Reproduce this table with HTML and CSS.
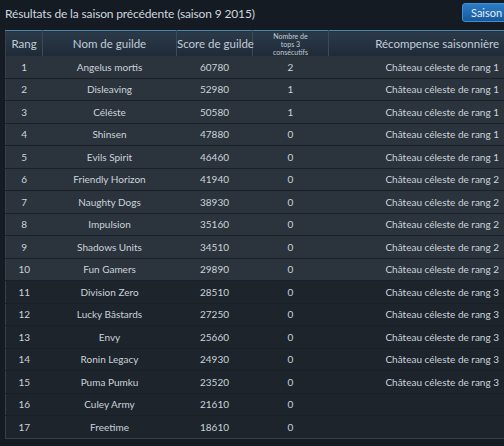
FILE: index.html
```html
<!DOCTYPE html>
<html lang="fr">
<head>
<meta charset="UTF-8">
<title>Résultats de la saison précédente</title>
<link rel="stylesheet" href="styles.css">
</head>
<body>

  <div class="top-bar">
    <h1 class="title">Résultats de la saison précédente (saison 9 2015)</h1>
    <button class="season-btn">Saison</button>
  </div>

  <table class="ranking">
    <thead>
      <tr>
        <th class="c-rank">Rang</th>
        <th class="c-name">Nom de guilde</th>
        <th class="c-score">Score de guilde</th>
        <th class="c-tops small">Nombre de<br>tops 3<br>consécutifs</th>
        <th class="c-reward">Récompense saisonnière</th>
      </tr>
    </thead>
    <tbody>
      <tr class="top"><td>1</td><td>Angelus mortis</td><td>60780</td><td>2</td><td class="c-reward">Château céleste de rang 1</td></tr>
      <tr class="top"><td>2</td><td>Disleaving</td><td>52980</td><td>1</td><td class="c-reward">Château céleste de rang 1</td></tr>
      <tr class="top"><td>3</td><td>Céléste</td><td>50580</td><td>1</td><td class="c-reward">Château céleste de rang 1</td></tr>
      <tr class="top"><td>4</td><td>Shinsen</td><td>47880</td><td>0</td><td class="c-reward">Château céleste de rang 1</td></tr>
      <tr class="top"><td>5</td><td>Evils Spirit</td><td>46460</td><td>0</td><td class="c-reward">Château céleste de rang 1</td></tr>
      <tr class="top"><td>6</td><td>Friendly Horizon</td><td>41940</td><td>0</td><td class="c-reward">Château céleste de rang 2</td></tr>
      <tr class="top"><td>7</td><td>Naughty Dogs</td><td>38930</td><td>0</td><td class="c-reward">Château céleste de rang 2</td></tr>
      <tr class="top"><td>8</td><td>Impulsion</td><td>35160</td><td>0</td><td class="c-reward">Château céleste de rang 2</td></tr>
      <tr class="top"><td>9</td><td>Shadows Units</td><td>34510</td><td>0</td><td class="c-reward">Château céleste de rang 2</td></tr>
      <tr class="top"><td>10</td><td>Fun Gamers</td><td>29890</td><td>0</td><td class="c-reward">Château céleste de rang 2</td></tr>
      <tr><td>11</td><td>Division Zero</td><td>28510</td><td>0</td><td class="c-reward">Château céleste de rang 3</td></tr>
      <tr><td>12</td><td>Lucky Bâstards</td><td>27250</td><td>0</td><td class="c-reward">Château céleste de rang 3</td></tr>
      <tr><td>13</td><td>Envy</td><td>25660</td><td>0</td><td class="c-reward">Château céleste de rang 3</td></tr>
      <tr><td>14</td><td>Ronin Legacy</td><td>24930</td><td>0</td><td class="c-reward">Château céleste de rang 3</td></tr>
      <tr><td>15</td><td>Puma Pumku</td><td>23520</td><td>0</td><td class="c-reward">Château céleste de rang 3</td></tr>
      <tr><td>16</td><td>Culey Army</td><td>21610</td><td>0</td><td class="c-reward"></td></tr>
      <tr><td>17</td><td>Freetime</td><td>18610</td><td>0</td><td class="c-reward"></td></tr>
    </tbody>
  </table>

</body>
</html>
```

FILE: styles.css
```css
body {
    margin: 0;
    background-color: #141b23;
    font-family: Lato, "Open Sans", sans-serif;
    color: #cbd3db;
    overflow: hidden;
}

/* Barre du haut */
.top-bar {
    display: flex;
    justify-content: space-between;
    align-items: center;
    height: 26px;
    padding-left: 5px;
}

.title {
    margin: 0;
    font-size: 12px;
    font-weight: normal;
    color: #cfd6de;
    letter-spacing: -0.15px;
}

.season-btn {
    align-self: flex-start;
    margin-top: 3px;
    margin-right: -4px;
    width: 46px;
    height: 19px;
    padding: 0 0 0 8px;
    text-align: left;
    border: 1px solid #3f8fd6;
    border-radius: 3px;
    background: linear-gradient(#2b7dc9, #17579a);
    color: #e6eef6;
    font-family: inherit;
    font-size: 11px;
}

/* Tableau */
.ranking {
    margin-left: 5px;
    margin-top: 4px;
    width: 499px;
    border-collapse: collapse;
    table-layout: fixed;
    font-size: 10px;
    border-left: 1px solid #36404b;
}

.ranking th {
    height: 25px;
    padding: 0;
    font-size: 11.5px;
    font-weight: normal;
    white-space: nowrap;
    color: #c3cdd7;
    background: linear-gradient(#2b3a4a, #1f2a37);
    border-top: 1px solid #4d86ab;
    border-right: 1px solid #3b4a5a;
}

.ranking th.small {
    font-size: 7px;
    line-height: 8px;
}

.ranking th:last-child {
    border-right: none;
}

.c-rank { width: 36px; }
.c-name { width: 133px; }
.c-score { width: 75px; }
.c-tops { width: 75px; }

.ranking td {
    height: 21.5px;
    padding: 0;
    text-align: center;
    border-bottom: 1px solid #1a2027;
    background-color: #1d242c;
}

.ranking tr.top td {
    background-color: #2b333c;
}

.ranking tr:last-child td {
    border-bottom: 1px solid #36404b;
}

.ranking .c-reward {
    text-align: right;
    padding-right: 5px;
}
```
